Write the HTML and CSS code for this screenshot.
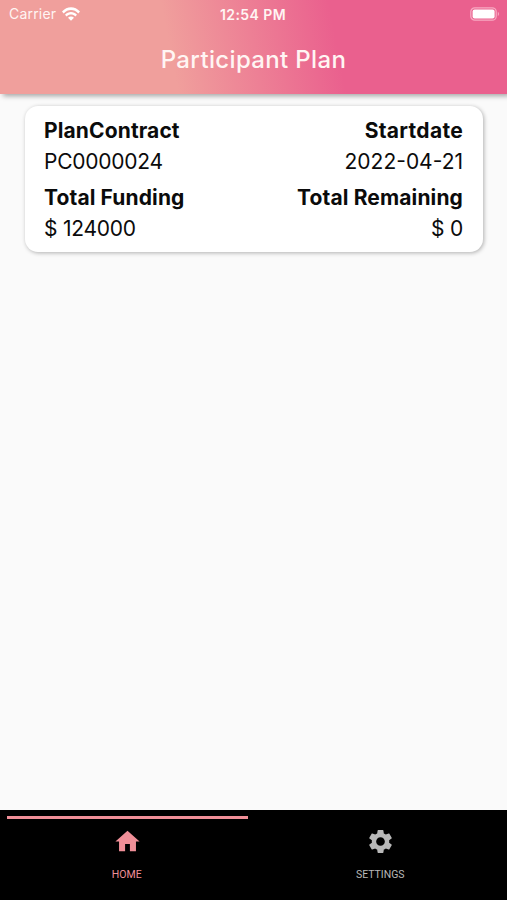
FILE: index.html
```html
<!DOCTYPE html>
<html lang="en">
<head>
<meta charset="utf-8">
<title>Participant Plan</title>
<link rel="stylesheet" href="styles.css">
</head>
<body>
<div class="app">
  <header class="header">
    <div class="status">
      <div class="carrier"><span>Carrier</span>
        <svg class="wifi" viewBox="0 0 18 14"><path d="M0 4.6C5-1.2 13-1.2 18 4.6L16.3 6.4C12.1 1.8 5.9 1.8 1.7 6.4ZM3 7.7C6.4 4 11.6 4 15 7.7L13.3 9.4C10.8 6.8 7.2 6.8 4.7 9.4ZM6 10.7C7.8 9 10.2 9 12 10.7L9 13.8Z"/></svg>
      </div>
      <div class="time">12:54 PM</div>
      <div class="power"><svg class="battery" viewBox="0 0 31 14"><rect class="shell" x=".8" y=".8" width="25.4" height="12.4" rx="4"/><rect x="2.6" y="2.4" width="22" height="9.2" rx="2"/><path class="cap" d="M27.8 4.8Q30.4 7 27.8 9.2Z"/></svg></div>
    </div>
    <h1 class="title">Participant Plan</h1>
  </header>
  <main class="content">
    <section class="card">
      <div class="row label"><span>PlanContract</span><span class="start">Startdate</span></div>
      <div class="row value"><span>PC0000024</span><span class="date">2022-04-21</span></div>
      <div class="row label"><span>Total Funding</span><span>Total Remaining</span></div>
      <div class="row value"><span>$ 124000</span><span>$ 0</span></div>
    </section>
  </main>
  <nav class="tabs">
    <a class="tab active">
      <svg class="icon" viewBox="0 0 24 24"><path d="M10 20v-6h4v6h5v-8h3L12 3 2 12h3v8z"/></svg>
      <span>HOME</span>
    </a>
    <a class="tab">
      <svg class="icon" viewBox="0 0 24 24"><path d="M19.14 12.94c.04-.3.06-.61.06-.94 0-.32-.02-.64-.07-.94l2.03-1.58c.18-.14.23-.41.12-.61l-1.92-3.32c-.12-.22-.37-.29-.59-.22l-2.39.96c-.5-.38-1.03-.7-1.62-.94l-.36-2.54c-.04-.24-.24-.41-.48-.41h-3.84c-.24 0-.43.17-.47.41l-.36 2.54c-.59.24-1.13.57-1.62.94l-2.39-.96c-.22-.08-.47 0-.59.22L2.74 8.87c-.12.21-.08.47.12.61l2.03 1.58c-.05.3-.09.63-.09.94s.02.64.07.94l-2.03 1.58c-.18.14-.23.41-.12.61l1.92 3.32c.12.22.37.29.59.22l2.39-.96c.5.38 1.03.7 1.62.94l.36 2.54c.05.24.24.41.48.41h3.84c.24 0 .44-.17.47-.41l.36-2.54c.59-.24 1.13-.56 1.62-.94l2.39.96c.22.08.47 0 .59-.22l1.92-3.32c.12-.22.07-.47-.12-.61l-2.01-1.58zM12 15.6c-1.98 0-3.6-1.62-3.6-3.6s1.62-3.6 3.6-3.6 3.6 1.62 3.6 3.6-1.62 3.6-3.6 3.6z"/></svg>
      <span>SETTINGS</span>
    </a>
  </nav>
</div>
</body>
</html>
```
FILE: styles.css
```css
* { box-sizing: border-box; }
body { margin: 0; font-family: Inter, "Liberation Sans", sans-serif; }
.app { display: flex; flex-direction: column; height: 900px; background: #fafafa; }
.header {
  height: 94px;
  color: #fff5f3;
  background: linear-gradient(79deg, #f09f9c 0%, #f09f9c 34%, #ea608e 66%, #ea608e 100%);
  box-shadow: 3px 2px 5px rgba(0, 0, 0, .35);
}
.status { display: grid; grid-template-columns: 1fr auto 1fr; align-items: center; height: 28px; padding: 0 6px 0 9px; font-size: 14px; }
.carrier { display: flex; align-items: center; gap: 6px; letter-spacing: .2px; line-height: 16px; margin-top: -1px; }
.wifi { width: 18px; height: 14px; fill: #fff; }
.time { font-weight: 600; font-size: 14px; letter-spacing: .4px; margin: 0 2px 0 -2px; }
.power { display: flex; justify-content: flex-end; }
.battery { width: 31px; height: 14px; fill: #fff; margin-top: -1px; }
.shell { fill: none; stroke: #f7a9c2; stroke-width: 1.3; }
.cap { fill: #f7a9c2; }
.title { margin: 0; font-size: 24px; font-weight: 500; line-height: 30px; padding-top: 17px; text-align: center; letter-spacing: .35px; }
.content { flex: 1; padding: 12px 24px 0 25px; }
.card { height: 146px; padding: 10px 20px 10px 19px; border-radius: 13px; background: #fff; color: #0b0b0b; font-size: 21px; box-shadow: 1px 1px 4px rgba(0, 0, 0, .3); }
.row { display: flex; justify-content: space-between; }
.label { height: 31px; line-height: 30px; font-weight: 700; letter-spacing: .12px; }
.start { letter-spacing: .3px; }
.value { height: 36px; line-height: 30px; letter-spacing: -.25px; }
.date { letter-spacing: 0; }
.tabs { display: flex; height: 90px; background: #000; }
.tab { flex: 1; display: flex; flex-direction: column; align-items: center; padding-top: 17px; color: #b8b8b8; font: 10.5px/14px Roboto, sans-serif; position: relative; }
.active { color: #f08f98; }
.active::before { content: ""; position: absolute; left: 7px; right: 6px; top: 6px; height: 3px; background: #f08f98; }
.icon { width: 29px; height: 29px; fill: currentColor; margin-bottom: 12px; }
.active .icon { margin-left: 1px; }
```
